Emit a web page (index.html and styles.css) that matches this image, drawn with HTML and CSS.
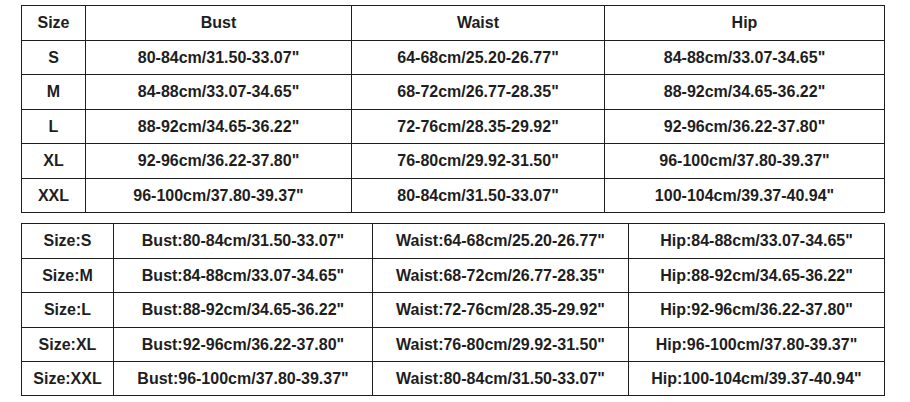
FILE: index.html
```html
<!DOCTYPE html>
<html lang="en">
<head>
<meta charset="utf-8">
<title>Size chart</title>
<link rel="stylesheet" href="styles.css">
</head>
<body>
<div class="chart chart-top">
  <div class="cell">Size</div><div class="cell">Bust</div><div class="cell">Waist</div><div class="cell">Hip</div>
  <div class="cell">S</div><div class="cell">80-84cm/31.50-33.07"</div><div class="cell">64-68cm/25.20-26.77"</div><div class="cell">84-88cm/33.07-34.65"</div>
  <div class="cell">M</div><div class="cell">84-88cm/33.07-34.65"</div><div class="cell">68-72cm/26.77-28.35"</div><div class="cell">88-92cm/34.65-36.22"</div>
  <div class="cell">L</div><div class="cell">88-92cm/34.65-36.22"</div><div class="cell">72-76cm/28.35-29.92"</div><div class="cell">92-96cm/36.22-37.80"</div>
  <div class="cell">XL</div><div class="cell">92-96cm/36.22-37.80"</div><div class="cell">76-80cm/29.92-31.50"</div><div class="cell">96-100cm/37.80-39.37"</div>
  <div class="cell">XXL</div><div class="cell">96-100cm/37.80-39.37"</div><div class="cell">80-84cm/31.50-33.07"</div><div class="cell">100-104cm/39.37-40.94"</div>
</div>
<div class="chart chart-bottom">
  <div class="cell">Size:S</div><div class="cell">Bust:80-84cm/31.50-33.07"</div><div class="cell">Waist:64-68cm/25.20-26.77"</div><div class="cell">Hip:84-88cm/33.07-34.65"</div>
  <div class="cell">Size:M</div><div class="cell">Bust:84-88cm/33.07-34.65"</div><div class="cell">Waist:68-72cm/26.77-28.35"</div><div class="cell">Hip:88-92cm/34.65-36.22"</div>
  <div class="cell">Size:L</div><div class="cell">Bust:88-92cm/34.65-36.22"</div><div class="cell">Waist:72-76cm/28.35-29.92"</div><div class="cell">Hip:92-96cm/36.22-37.80"</div>
  <div class="cell">Size:XL</div><div class="cell">Bust:92-96cm/36.22-37.80"</div><div class="cell">Waist:76-80cm/29.92-31.50"</div><div class="cell">Hip:96-100cm/37.80-39.37"</div>
  <div class="cell">Size:XXL</div><div class="cell">Bust:96-100cm/37.80-39.37"</div><div class="cell">Waist:80-84cm/31.50-33.07"</div><div class="cell">Hip:100-104cm/39.37-40.94"</div>
</div>
</body>
</html>
```
FILE: styles.css
```css
html, body {
  margin: 0;
  padding: 0;
  background: #ffffff;
}
body {
  padding: 5px 0 0 21px;
  font-family: "Liberation Sans", Arial, sans-serif;
  font-weight: bold;
  font-size: 16px;
  color: #1e1e1e;
}
.chart {
  display: grid;
  gap: 1px;
  padding: 1px;
  background: #1e1e1e;
  width: 862px;
}
.chart-top {
  grid-template-columns: 63px 265px 252px 279px;
  grid-template-rows: 34px 33px 34px 33px 34px 33px;
}
.chart-bottom {
  margin-top: 10px;
  grid-template-columns: 91px 258px 255px 255px;
  grid-template-rows: 34px 33px 34px 33px 33px;
}
.cell {
  background: #ffffff;
  display: flex;
  align-items: center;
  justify-content: center;
  white-space: nowrap;
  line-height: 1;
}
```
